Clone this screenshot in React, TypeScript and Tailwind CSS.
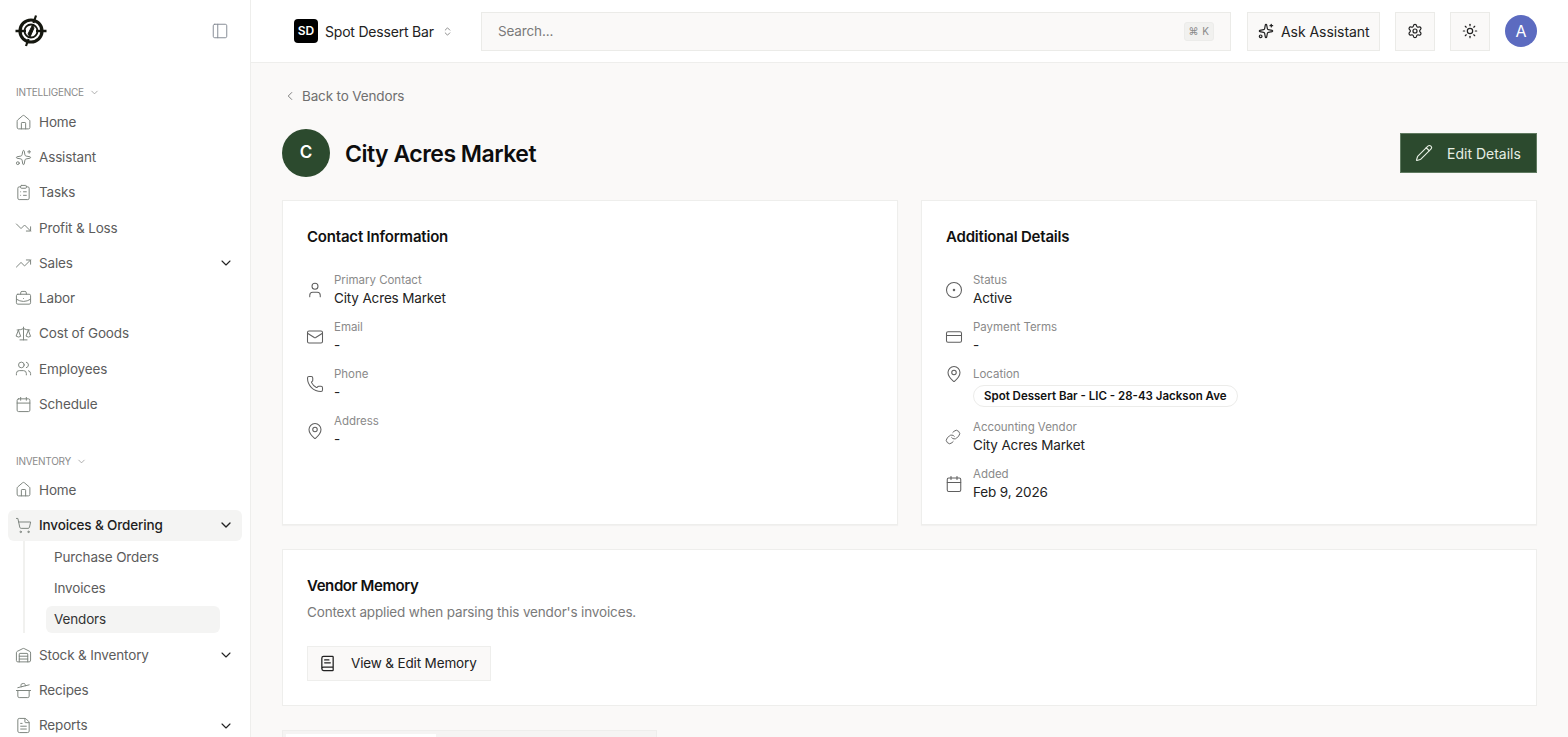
import {
  House, Sparkles, ClipboardList, TrendingDown, TrendingUp, BriefcaseBusiness, Scale, Users, Calendar,
  ShoppingCart, Warehouse, CookingPot, FileText, ChevronDown, ChevronLeft, ChevronsUpDown, PanelLeft,
  Settings, Sun, Pencil, User, Mail, Phone, MapPin, CircleDot, CreditCard, Link, BookText,
} from 'lucide-react';
import type { ReactNode } from 'react';

const font = { fontFamily: 'Inter, "Noto Sans", sans-serif' };

function Logo() {
  return (
    <svg width="32" height="32" viewBox="0 0 32 32" fill="none" stroke="#15170f">
      <circle cx="16" cy="16" r="11" strokeWidth="3.2" />
      <circle cx="16" cy="16" r="6.5" strokeWidth="1.8" />
      <path d="M0.5 16H11M21 16H31.5" strokeWidth="2.4" />
      <path d="M21 0.5L18.5 8M13.5 24L11 31" strokeWidth="2.2" />
      <path d="M17.5 10L19 13L15 22L13 19Z" fill="#15170f" strokeWidth="1" />
    </svg>
  );
}

function NavItem({ icon, label, chevron, active }: { icon: ReactNode; label: string; chevron?: boolean; active?: boolean }) {
  return (
    <div
      className={`mb-[4.25px] flex h-[31px] items-center rounded-md pl-[7px] pr-[8px] text-[13.5px] tracking-[-0.15px] ${
        active ? 'bg-[#f4f4f3] font-medium text-[#1e1e1e]' : 'text-[#5c5c5c]'
      }`}
    >
      <span className="flex w-[24px] shrink-0 text-[#7d857e]">{icon}</span>
      <span className="flex-1">{label}</span>
      {chevron && <ChevronDown size={16} strokeWidth={active ? 2 : 1.6} className="text-[#222]" />}
    </div>
  );
}

function SectionLabel({ label }: { label: string }) {
  return (
    <div className="flex h-[16px] items-center gap-[5px] pl-[8px] text-[10px] uppercase tracking-[-0.28px] text-[#8a8a8a]">
      {label}
      <ChevronDown size={11} strokeWidth={1.5} />
    </div>
  );
}

function Sidebar() {
  const ic = { size: 17, strokeWidth: 1.4 };
  return (
    <aside className="flex h-[737px] w-[251px] shrink-0 flex-col overflow-hidden border-r border-[#eeeeec] bg-white">
      <div className="flex h-[62px] shrink-0 items-center justify-between pl-[15px] pr-[21px]">
        <Logo />
        <PanelLeft size={18} strokeWidth={1.3} className="text-[#858b94]" />
      </div>
      <div className="px-[8px] pt-[22px]">
        <SectionLabel label="Intelligence" />
        <div className="mt-[6.5px]">
          <NavItem icon={<House {...ic} />} label="Home" />
          <NavItem icon={<Sparkles {...ic} />} label="Assistant" />
          <NavItem icon={<ClipboardList {...ic} />} label="Tasks" />
          <NavItem icon={<TrendingDown {...ic} />} label="Profit & Loss" />
          <NavItem icon={<TrendingUp {...ic} />} label="Sales" chevron />
          <NavItem icon={<BriefcaseBusiness {...ic} />} label="Labor" />
          <NavItem icon={<Scale {...ic} />} label="Cost of Goods" />
          <NavItem icon={<Users {...ic} />} label="Employees" />
          <NavItem icon={<Calendar {...ic} />} label="Schedule" />
        </div>
        <div className="mt-[34px]">
          <SectionLabel label="Inventory" />
        </div>
        <div className="mt-[4.8px]">
          <NavItem icon={<House {...ic} />} label="Home" />
          <NavItem icon={<ShoppingCart {...ic} />} label="Invoices & Ordering" chevron active />
        </div>
        <div className="mb-[7px] ml-[15px] -mt-[4.25px] border-l-2 border-[#f1f1ef] pl-[21px] pr-[22px] pt-[1px] text-[13.5px] tracking-[-0.15px] text-[#5c5c5c]">
          <div className="flex h-[32px] items-center pl-[8px]">Purchase Orders</div>
          <div className="flex h-[30px] items-center pl-[8px]">Invoices</div>
          <div className="mb-[2px] mt-[2px] flex h-[27px] items-center rounded-md bg-[#f4f4f3] pl-[8px] text-[#333]">Vendors</div>
        </div>
        <NavItem icon={<Warehouse {...ic} />} label="Stock & Inventory" chevron />
        <NavItem icon={<CookingPot {...ic} />} label="Recipes" />
        <NavItem icon={<FileText {...ic} />} label="Reports" chevron />
      </div>
    </aside>
  );
}

function Header() {
  return (
    <header className="flex h-[63px] shrink-0 items-center border-b border-[#eeeeec] bg-white pl-[43px] pr-[31px]">
      <div className="flex w-[187px] shrink-0 items-center">
        <span className="flex h-[24px] w-[24px] items-center justify-center rounded-[4px] bg-black text-[12px] font-semibold text-white">SD</span>
        <span className="ml-[7px] text-[14px] tracking-[-0.2px] text-[#222]">Spot Dessert Bar</span>
        <ChevronsUpDown size={11} strokeWidth={1.6} className="ml-[8px] text-[#666]" />
      </div>
      <div className="flex h-[39px] flex-1 items-center justify-between border border-[#ebebe8] bg-[#faf9f8] pl-[16px] pr-[16px] text-[13.5px] tracking-[-0.15px] text-[#7a7a7a]">
        Search...
        <span className="flex h-[19px] w-[30px] items-center justify-center rounded-[3px] border border-[#ececea] bg-[#f1f1ef] text-[10px] tracking-[0.5px] text-[#8a8a8a]">⌘ K</span>
      </div>
      <button className="ml-[16px] flex h-[39px] w-[133px] shrink-0 items-center border border-[#ebebe8] bg-[#faf9f8] pl-[10px] text-[14px] tracking-[-0.05px] text-[#222]">
        <Sparkles size={16} strokeWidth={1.8} className="mr-[7px]" />
        Ask Assistant
      </button>
      <button className="ml-[15px] flex h-[39px] w-[40px] shrink-0 items-center justify-center border border-[#ebebe8] bg-[#faf9f8]">
        <Settings size={16} strokeWidth={1.8} className="text-[#222]" />
      </button>
      <button className="ml-[15px] flex h-[39px] w-[40px] shrink-0 items-center justify-center border border-[#ebebe8] bg-[#faf9f8]">
        <Sun size={16} strokeWidth={1.8} className="text-[#222]" />
      </button>
      <span className="ml-[15px] flex h-[32px] w-[32px] shrink-0 items-center justify-center rounded-full bg-[#5c6bc0] text-[16px] text-white">A</span>
    </header>
  );
}

function Field({ icon, label, value, alignTop }: { icon: ReactNode; label: string; value: ReactNode; alignTop?: boolean }) {
  return (
    <div className={`flex gap-[10px] ${alignTop ? 'items-start' : 'items-center'}`}>
      <span className={`-ml-[1px] flex w-[18px] shrink-0 text-[#5f5f5f] ${alignTop ? '-mt-[1px]' : ''}`}>{icon}</span>
      <div>
        <div className="h-[16px] text-[11.5px] leading-[16px] tracking-[-0.03px] text-[#8a8a8a]">{label}</div>
        <div className="-mt-[0.5px] mb-[0.5px] text-[13.5px] leading-[20px] tracking-[-0.15px] text-[#222]">{value}</div>
      </div>
    </div>
  );
}

function Card({ title, children }: { title: string; children: ReactNode }) {
  return (
    <section className="flex h-[325px] flex-1 flex-col border border-[#eeeeec] bg-white px-[24px] pt-[26px] shadow-[0_1px_1px_rgba(0,0,0,0.03)]">
      <h2 className="text-[15px] font-semibold leading-[20px] tracking-[-0.2px] text-[#111]">{title}</h2>
      <div className="mt-[25px] flex flex-col gap-[11px]">{children}</div>
    </section>
  );
}

export default function App() {
  const ic = { size: 18, strokeWidth: 1.4 };
  return (
    <div className="flex h-[737px] w-full overflow-hidden bg-[#faf9f8]" style={font}>
      <Sidebar />
      <div className="flex min-w-0 flex-1 flex-col">
        <Header />
        <main className="flex-1 overflow-hidden pl-[31px] pr-[31px] pt-[24px]">
          <div className="flex h-[18px] items-center text-[13.5px] tracking-[-0.15px] text-[#6f6f6f]">
            <ChevronLeft size={14} strokeWidth={1.5} className="ml-[1px] mr-[5px]" />
            Back to Vendors
          </div>
          <div className="mt-[24px] flex h-[48px] items-center justify-between">
            <div className="flex items-center">
              <span className="flex h-[48px] w-[48px] items-center justify-center rounded-full bg-[#2c4a2e] text-[17px] font-semibold text-white">C</span>
              <h1 className="ml-[15px] pt-[2px] text-[23px] font-semibold tracking-[-0.5px] text-[#0d0d0d]">City Acres Market</h1>
            </div>
            <button className="flex h-[40px] w-[137px] items-center border border-[#5f7a60] bg-[#2c4a2e] pl-[14px] text-[14px] text-[#e6eee3]">
              <Pencil size={18} strokeWidth={1.5} className="mr-[14px]" />
              Edit Details
            </button>
          </div>
          <div className="mt-[23px] flex gap-[23px]">
            <Card title="Contact Information">
              <Field icon={<User {...ic} />} label="Primary Contact" value="City Acres Market" />
              <Field icon={<Mail {...ic} />} label="Email" value="-" />
              <Field icon={<Phone {...ic} />} label="Phone" value="-" />
              <Field icon={<MapPin {...ic} />} label="Address" value="-" />
            </Card>
            <Card title="Additional Details">
              <Field icon={<CircleDot {...ic} />} label="Status" value="Active" />
              <Field icon={<CreditCard {...ic} />} label="Payment Terms" value="-" />
              <Field
                alignTop
                icon={<MapPin {...ic} />}
                label="Location"
                value={
                  <div className="mb-[1px] mt-[3.5px] flex h-[22px] w-fit items-center rounded-full border border-[#ececea] bg-white px-[10px] text-[11.5px] font-semibold tracking-normal text-[#111]">
                    Spot Dessert Bar - LIC - 28-43 Jackson Ave
                  </div>
                }
              />
              <Field icon={<Link {...ic} size={16} />} label="Accounting Vendor" value="City Acres Market" />
              <Field icon={<Calendar {...ic} />} label="Added" value="Feb 9, 2026" />
            </Card>
          </div>
          <section className="mt-[24px] h-[157px] border border-[#eeeeec] bg-white px-[24px] pt-[26px]">
            <h2 className="text-[15px] font-semibold leading-[20px] tracking-[-0.4px] text-[#111]">Vendor Memory</h2>
            <p className="mt-[6px] text-[13.5px] leading-[20px] tracking-[-0.15px] text-[#7a7a7a]">Context applied when parsing this vendor's invoices.</p>
            <button className="mt-[24px] flex h-[35px] w-[184px] items-center border border-[#eeeeec] bg-[#faf9f8] pl-[11px] text-[13.5px] tracking-[-0.15px] text-[#222]">
              <BookText size={17} strokeWidth={1.8} className="mr-[15px]" />
              View & Edit Memory
            </button>
          </section>
          <div className="mt-[24px] flex h-[40px] w-[375px] border border-[#eeeeec] bg-[#f5f4f3] pl-[3px] pt-[3px]">
            <div className="h-full w-[150px] bg-white" />
          </div>
        </main>
      </div>
    </div>
  );
}
